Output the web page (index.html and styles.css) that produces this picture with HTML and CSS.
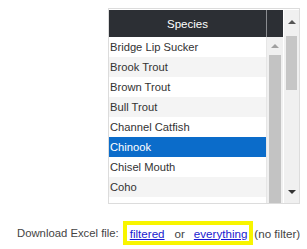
FILE: index.html
```html
<!DOCTYPE html>
<html>
<head>
<meta charset="utf-8">
<link rel="stylesheet" href="styles.css">
</head>
<body>
<div class="page">
  <div class="frame">
    <div class="table">
      <div class="head">
        <div class="head-title">Species</div>
        <div class="head-gap"></div>
      </div>
      <div class="body">
        <div class="rows">
          <div class="row">Bridge Lip Sucker</div>
          <div class="row alt">Brook Trout</div>
          <div class="row">Brown Trout</div>
          <div class="row alt">Bull Trout</div>
          <div class="row">Channel Catfish</div>
          <div class="row selected">Chinook</div>
          <div class="row">Chisel Mouth</div>
          <div class="row alt">Coho</div>
        </div>
        <div class="inner-scroll">
          <div class="arrow-btn"><span class="tri up light"></span></div>
          <div class="inner-thumb"></div>
        </div>
      </div>
    </div>
    <div class="outer-scroll">
      <div class="arrow-btn outer"><span class="tri up"></span></div>
      <div class="outer-thumb"></div>
      <div class="spacer"></div>
      <div class="arrow-btn outer bottom"><span class="tri down"></span></div>
    </div>
  </div>
  <div class="download">
    <span class="label">Download Excel file:</span>
    <span class="box">
      <a class="link" href="#">filtered</a>
      <span class="or">or</span>
      <a class="link" href="#">everything</a>
    </span>
    <span class="note">(no filter)</span>
  </div>
</div>
</body>
</html>
```
FILE: styles.css
```css
html, body {
  margin: 0;
  padding: 0;
  background: #ffffff;
}
body {
  font-family: "Liberation Sans", Arial, sans-serif;
  color: #333333;
  width: 307px;
  height: 249px;
  overflow: hidden;
}
.page {
  padding-top: 8px;
}
.frame {
  margin-left: 108px;
  width: 190px;
  height: 193px;
  border: 1px solid #dcdcdc;
  display: flex;
  overflow: hidden;
  padding-top: 1px;
}
.table {
  width: 174px;
  display: flex;
  flex-direction: column;
}
.head {
  height: 27px;
  display: flex;
  background: #2c2f34;
  flex: none;
}
.head-title {
  width: 157px;
  border-right: 1px solid #8a8c90;
  color: #ffffff;
  font-size: 11.5px;
  display: flex;
  align-items: center;
  justify-content: center;
  padding-top: 1px;
}
.head-gap {
  flex: 1;
}
.body {
  display: flex;
  flex: 1;
  min-height: 0;
}
.rows {
  width: 157px;
  border-right: 1px solid #e6e6e6;
}
.row {
  height: 20px;
  line-height: 20px;
  font-size: 11.2px;
  padding-left: 1px;
  color: #333333;
  background: #ffffff;
  white-space: nowrap;
}
.row.alt {
  background: #f4f4f4;
}
.row.selected {
  background: #0b6cca;
  color: #ffffff;
}
.inner-scroll {
  flex: 1;
  background: #f0f0f0;
  display: flex;
  flex-direction: column;
  align-items: center;
}
.arrow-btn {
  height: 18px;
  display: flex;
  align-items: center;
  justify-content: center;
  width: 100%;
  flex: none;
}
.inner-thumb {
  width: 12px;
  flex: 1;
  background: #c3c3c3;
}
.tri {
  width: 0;
  height: 0;
  border-left: 4px solid transparent;
  border-right: 4px solid transparent;
}
.tri.up {
  border-bottom: 4px solid #555555;
}
.tri.up.light {
  border-bottom-color: #a0a0a0;
}
.tri.down {
  border-top: 4px solid #333333;
}
.outer-scroll {
  margin-left: 1px;
  width: 15px;
  background: #f0f0f0;
  display: flex;
  flex-direction: column;
  align-items: center;
}
.arrow-btn.outer {
  height: 24px;
}
.outer-thumb {
  width: 11px;
  height: 54px;
  background: #c6c6c6;
  margin-top: 2px;
}
.spacer {
  flex: 1;
}
.arrow-btn.bottom {
  height: 22px;
}
.download {
  display: flex;
  align-items: center;
  padding-left: 17px;
  margin-top: 17px;
  font-size: 11.6px;
  color: #444444;
}
.label {
  font-size: 11.3px;
  margin-right: 4px;
}
.box {
  display: flex;
  align-items: center;
  border: 4px solid #f8f500;
  height: 16px;
  padding: 0 2px 0 3px;
}
.link {
  color: #1a1ad0;
  text-decoration: underline;
}
.or {
  margin: 0 9px 0 10px;
}
.note {
  margin-left: 1px;
}
```
